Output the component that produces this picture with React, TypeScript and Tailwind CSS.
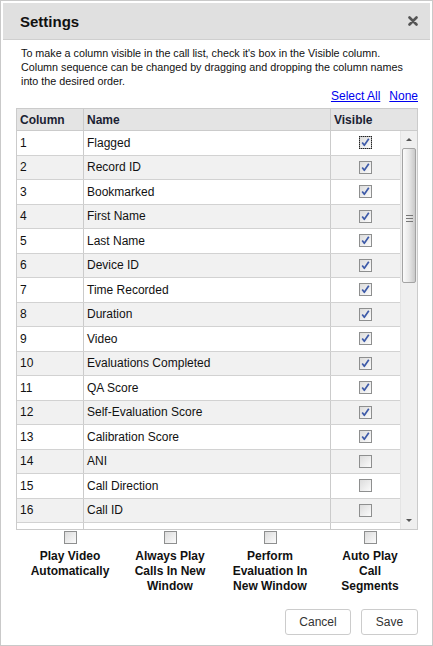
import * as React from "react";

const COLUMNS: Array<{ name: string; visible: boolean }> = [
  { name: "Flagged", visible: true },
  { name: "Record ID", visible: true },
  { name: "Bookmarked", visible: true },
  { name: "First Name", visible: true },
  { name: "Last Name", visible: true },
  { name: "Device ID", visible: true },
  { name: "Time Recorded", visible: true },
  { name: "Duration", visible: true },
  { name: "Video", visible: true },
  { name: "Evaluations Completed", visible: true },
  { name: "QA Score", visible: true },
  { name: "Self-Evaluation Score", visible: true },
  { name: "Calibration Score", visible: true },
  { name: "ANI", visible: false },
  { name: "Call Direction", visible: false },
  { name: "Call ID", visible: false },
];

const OPTIONS = [
  ["Play Video", "Automatically"],
  ["Always Play", "Calls In New", "Window"],
  ["Perform", "Evaluation In", "New Window"],
  ["Auto Play", "Call", "Segments"],
];

function Checkbox({ checked, focused }: { checked?: boolean; focused?: boolean }) {
  return (
    <span
      className={`relative flex h-[13px] w-[13px] shrink-0 items-center justify-center border border-[#8e8f8f] bg-gradient-to-br from-[#dcdcdc] to-[#fbfbfb] ${
        focused ? "outline-1 outline-offset-[-1px] outline-dotted outline-[#222]" : ""
      }`}
    >
      {checked ? (
        <svg viewBox="0 0 11 11" className="h-[11px] w-[11px]" aria-hidden>
          <path d="M2.2 5.6 L4.3 8.3 L8.8 1.8" fill="none" stroke="#3d5aa8" strokeWidth="1.7" strokeLinejoin="round" />
        </svg>
      ) : null}
    </span>
  );
}

function ScrollbarFake() {
  return (
    <div className="flex w-[17px] shrink-0 flex-col border-l border-[#e4e4e4] bg-[#efefef]">
      <div className="flex h-[17px] items-center justify-center">
        <span className="h-0 w-0 border-x-[3px] border-b-[3px] border-x-transparent border-b-[#555]" />
      </div>
      <div className="mx-[1px] flex h-[135px] items-center justify-center rounded-[2px] border border-[#a3a3a3] bg-gradient-to-r from-[#fbfbfb] via-[#e8e8e8] to-[#c9c9c9]">
        <div className="mt-[6px] flex flex-col gap-[2px]">
          <span className="block h-px w-[7px] bg-[#777]" />
          <span className="block h-px w-[7px] bg-[#777]" />
          <span className="block h-px w-[7px] bg-[#777]" />
        </div>
      </div>
      <div className="flex-1" />
      <div className="flex h-[17px] items-center justify-center">
        <span className="h-0 w-0 border-x-[3px] border-t-[3px] border-x-transparent border-t-[#555]" />
      </div>
    </div>
  );
}

export default function App() {
  return (
    <div
      className="h-[646px] w-[433px] border border-[#c9c9c9] bg-white p-[2px] text-[#111]"
      style={{ fontFamily: '"Liberation Sans", Arial, sans-serif' }}
    >
      {/* Header */}
      <div className="flex h-[37px] items-center justify-between border-b border-[#cfcfcf] bg-[#e0e0e0] pl-[17px] pr-[12px]">
        <h1 className="text-[15px] font-bold leading-none text-[#111]">Settings</h1>
        <svg viewBox="0 0 10 10" className="h-[10px] w-[10px]" aria-hidden>
          <path d="M1.5 1.5 L8.5 8.5 M8.5 1.5 L1.5 8.5" stroke="#555" strokeWidth="2.6" strokeLinecap="round" />
        </svg>
      </div>

      <p className="mt-[6px] px-[18px] text-[10.75px] leading-[14px] text-[#111]">
        To make a column visible in the call list, check it's box in the Visible column.
        <br />
        Column sequence can be changed by dragging and dropping the column names
        <br />
        into the desired order.
      </p>

      <div className="flex h-[14px] items-center justify-end gap-[9px] pr-[12px] pt-[1px] text-[12px] leading-[14px]">
        <a className="text-[#0000ee] underline">Select All</a>
        <a className="text-[#0000ee] underline">None</a>
      </div>

      {/* Column table */}
      <div className="ml-[13px] mr-[12px] mt-[6px] border border-[#cbcbcb]">
        <div className="flex h-[22px] items-center border-b border-[#cbcbcb] bg-[#e4e4e4] text-[12px] font-bold text-[#1b2233]">
          <div className="flex h-full w-[67px] items-center border-r border-[#cbcbcb] pl-[3px]">Column</div>
          <div className="flex h-full w-[247px] items-center border-r border-[#cbcbcb] pl-[3px]">Name</div>
          <div className="flex h-full flex-1 items-center pl-[3px]">Visible</div>
        </div>
        <div className="flex h-[398px] overflow-hidden">
          <div className="min-w-0 flex-1">
            {COLUMNS.map((c, i) => (
              <div
                key={c.name}
                className={`flex h-[24.5px] shrink-0 items-center border-b border-[#d2d2d2] text-[12px] text-[#111] ${
                  i % 2 === 1 ? "bg-[#f1f1f1]" : "bg-white"
                }`}
              >
                <div className="flex h-full w-[67px] items-center border-r border-[#cbcbcb] pl-[3px]">{i + 1}</div>
                <div className="flex h-full w-[247px] items-center border-r border-[#cbcbcb] pl-[3px]">{c.name}</div>
                <div className="flex h-full flex-1 items-center justify-center">
                  <Checkbox checked={c.visible} focused={i === 0} />
                </div>
              </div>
            ))}
            {/* next row, scrolled mostly out of view */}
            <div className="flex h-[24.5px] items-center bg-white">
              <div className="h-full w-[67px] border-r border-[#cbcbcb]" />
              <div className="h-full w-[247px] border-r border-[#cbcbcb]" />
              <div className="flex h-full flex-1 items-center justify-center">
                <Checkbox />
              </div>
            </div>
          </div>
          <ScrollbarFake />
        </div>
      </div>

      {/* Playback options */}
      <div className="ml-[17px] mr-[10px] mt-[1px] grid grid-cols-4">
        {OPTIONS.map((lines, i) => (
          <div key={i} className="flex flex-col items-center">
            <Checkbox />
            <div className="mt-[5px] text-center text-[12px] font-bold leading-[15px] text-[#111]">
              {lines.map((l) => (
                <div key={l}>{l}</div>
              ))}
            </div>
          </div>
        ))}
      </div>

      {/* Actions */}
      <div className="mt-[15px] flex justify-end gap-[10px] pr-[12px]">
        <button
          type="button"
          className="h-[26px] w-[66px] rounded-[3px] border border-[#cccccc] bg-white text-[12px] text-[#333]"
        >
          Cancel
        </button>
        <button
          type="button"
          className="h-[26px] w-[57px] rounded-[3px] border border-[#cccccc] bg-white text-[12px] text-[#333]"
        >
          Save
        </button>
      </div>
    </div>
  );
}
